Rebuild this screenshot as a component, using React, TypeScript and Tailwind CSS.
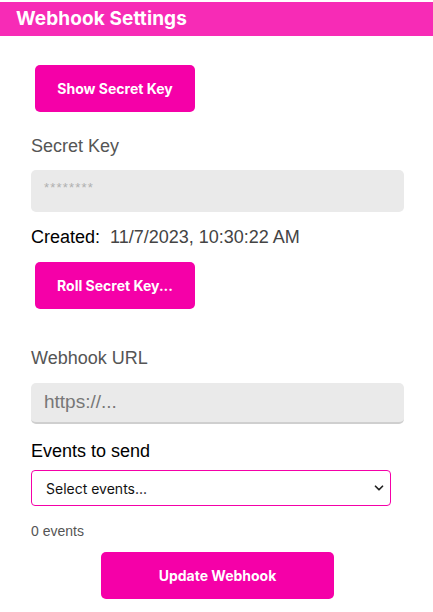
import { ChevronDown } from "lucide-react";

export default function App() {
  const btn =
    "flex items-center justify-center h-[47px] rounded-[5px] bg-[#f500a8] text-white text-[14px] font-bold font-['Inter',sans-serif]";

  return (
    <div className="w-[433px] h-[612px] bg-white overflow-hidden font-['Liberation_Sans',Arial,sans-serif]">
      <div className="mt-[2px] h-[34px] bg-[#f72bb6] px-4 flex items-center">
        <h1 className="text-white text-[19px] font-bold font-['Inter',sans-serif] tracking-[0.1px]">Webhook Settings</h1>
      </div>

      <div className="pl-[31px] pr-[29px]">
        <button className={`${btn} w-[160px] ml-[4px] mt-[29px]`}>Show Secret Key</button>

        <div className="mt-[23px] text-[18px] leading-[22px] text-[#555]">Secret Key</div>
        <div className="mt-[13px] h-[42px] rounded-[5px] bg-[#eaeaea] px-[13px] flex items-center">
          <span className="text-[13px] text-[#b0b0b0] -mt-[6px] tracking-[1.2px]">********</span>
        </div>

        <div className="mt-[14px] text-[18px] leading-[22px] flex gap-[10px]">
          <span className="text-black">Created:</span>
          <span className="text-[#444]">11/7/2023, 10:30:22 AM</span>
        </div>

        <button className={`${btn} w-[160px] ml-[4px] mt-[14px]`}>Roll Secret Key...</button>

        <div className="mt-[38px] text-[18px] leading-[22px] text-[#555]">Webhook URL</div>
        <div className="mt-[14px] h-[41px] rounded-[5px] bg-[#eaeaea] border-b-2 border-[#cfcfcf] px-[13px] flex items-center">
          <span className="text-[19px] text-[#777]">https://...</span>
        </div>

        <div className="mt-[16px] text-[18px] leading-[22px] text-black">Events to send</div>
        <div className="mt-[8px] w-[360px] h-[36px] rounded-[4px] border border-[#f500a8] pl-[14px] pr-[4px] flex items-center justify-between font-['Inter',sans-serif] text-[14px] text-[#111]">
          <span>Select events...</span>
          <ChevronDown className="w-[14px] h-[14px] text-[#222]" strokeWidth={3} />
        </div>

        <div className="mt-[17px] text-[14px] leading-[16px] text-[#555]">0 events</div>
      </div>

      <button className={`${btn} w-[233px] ml-[101px] mt-[13px]`}>Update Webhook</button>
    </div>
  );
}
